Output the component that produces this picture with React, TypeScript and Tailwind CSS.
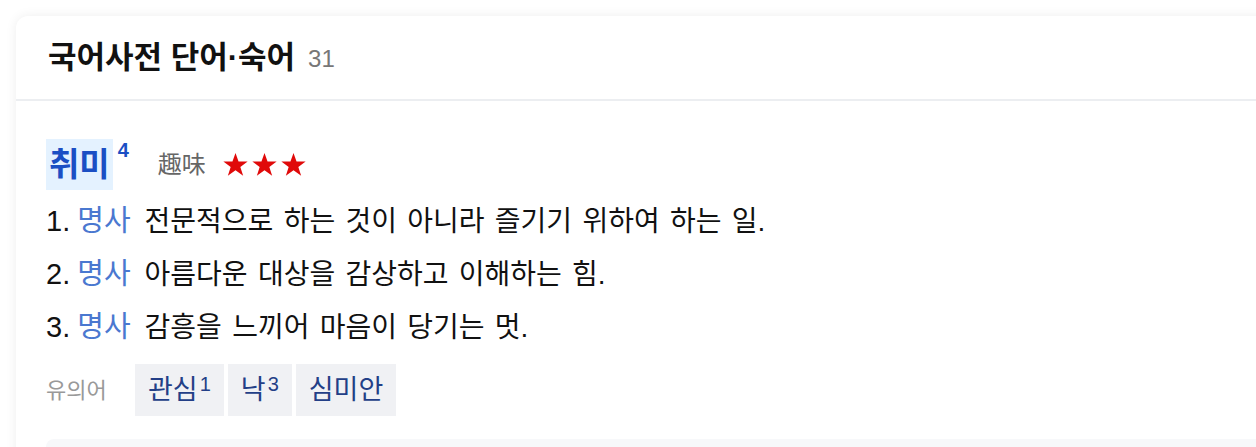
import React from 'react'

const FONT = '"Liberation Sans", "Noto Sans CJK KR", sans-serif'

const senses = [
  '전문적으로 하는 것이 아니라 즐기기 위하여 하는 일.',
  '아름다운 대상을 감상하고 이해하는 힘.',
  '감흥을 느끼어 마음이 당기는 멋.',
]

const synonyms = [
  { word: '관심', sup: '1' },
  { word: '낙', sup: '3' },
  { word: '심미안', sup: '' },
]

function Star() {
  return (
    <svg width="27" height="26" viewBox="0 0 24 23" className="block">
      <path d="M12 0.8l2.7 7.6h8.1l-6.5 4.8 2.5 7.8L12 16.2 5.2 21l2.5-7.8L1.2 8.4h8.1z" fill="#e00a0a" />
    </svg>
  )
}

export default function App() {
  return (
    <div className="w-[1256px] h-[447px] overflow-hidden bg-white" style={{ fontFamily: FONT }}>
      <div className="ml-4 mt-4 w-[1300px] rounded-xl bg-white shadow-[0_0_12px_rgba(0,0,0,0.07)]">
        {/* header */}
        <div className="h-[85px] flex items-center pl-8 border-b-2 border-[#eceef1]">
          <h2 className="text-[31px] font-bold text-[#111] leading-none">국어사전 단어·숙어</h2>
          <span className="ml-[13px] text-[24px] text-[#777] mt-[3px]">31</span>
        </div>

        <div className="pl-[30px] pt-[38px]">
          {/* headword */}
          <div className="flex items-center h-[51px]">
            <span className="bg-[#e4f2ff] px-[3px] h-[51px] flex items-center text-[33px] font-bold text-[#1b4fc4] leading-none">
              취미
            </span>
            <sup className="self-start mt-[11px] ml-[5px] text-[20px] font-bold text-[#1b4fc4] top-0">4</sup>
            <span className="ml-[29px] text-[24px] text-[#666]">趣味</span>
            <div className="ml-[16px] flex gap-[2px]">
              <Star />
              <Star />
              <Star />
            </div>
          </div>

          {/* senses */}
          <ol className="mt-[5px]">
            {senses.map((s, i) => (
              <li key={i} className="h-[53px] flex items-center text-[28px] text-[#111]">
                <span className="text-[29px] font-medium">{i + 1}.</span>
                <span className="ml-[7px] text-[29px] text-[#4a78d0]">명사</span>
                <span className="ml-[14px] [word-spacing:2.5px]">{s}</span>
              </li>
            ))}
          </ol>

          {/* synonyms */}
          <div className="mt-[10px] flex items-center">
            <span className="text-[22px] text-[#999] w-[89px]">유의어</span>
            <div className="flex gap-1">
              {synonyms.map((t) => (
                <span
                  key={t.word}
                  className="h-[52px] px-[13px] flex items-center bg-[#f0f1f4] text-[#233f87] text-[27px]"
                >
                  {t.word}
                  {t.sup && (
                    <sup className="text-[20px] self-start mt-[10px] top-0 ml-[2px] leading-none">{t.sup}</sup>
                  )}
                </span>
              ))}
            </div>
          </div>

          <div className="mt-[23px] h-[40px] rounded-lg bg-[#f7f8fa]" />
        </div>
      </div>
    </div>
  )
}
